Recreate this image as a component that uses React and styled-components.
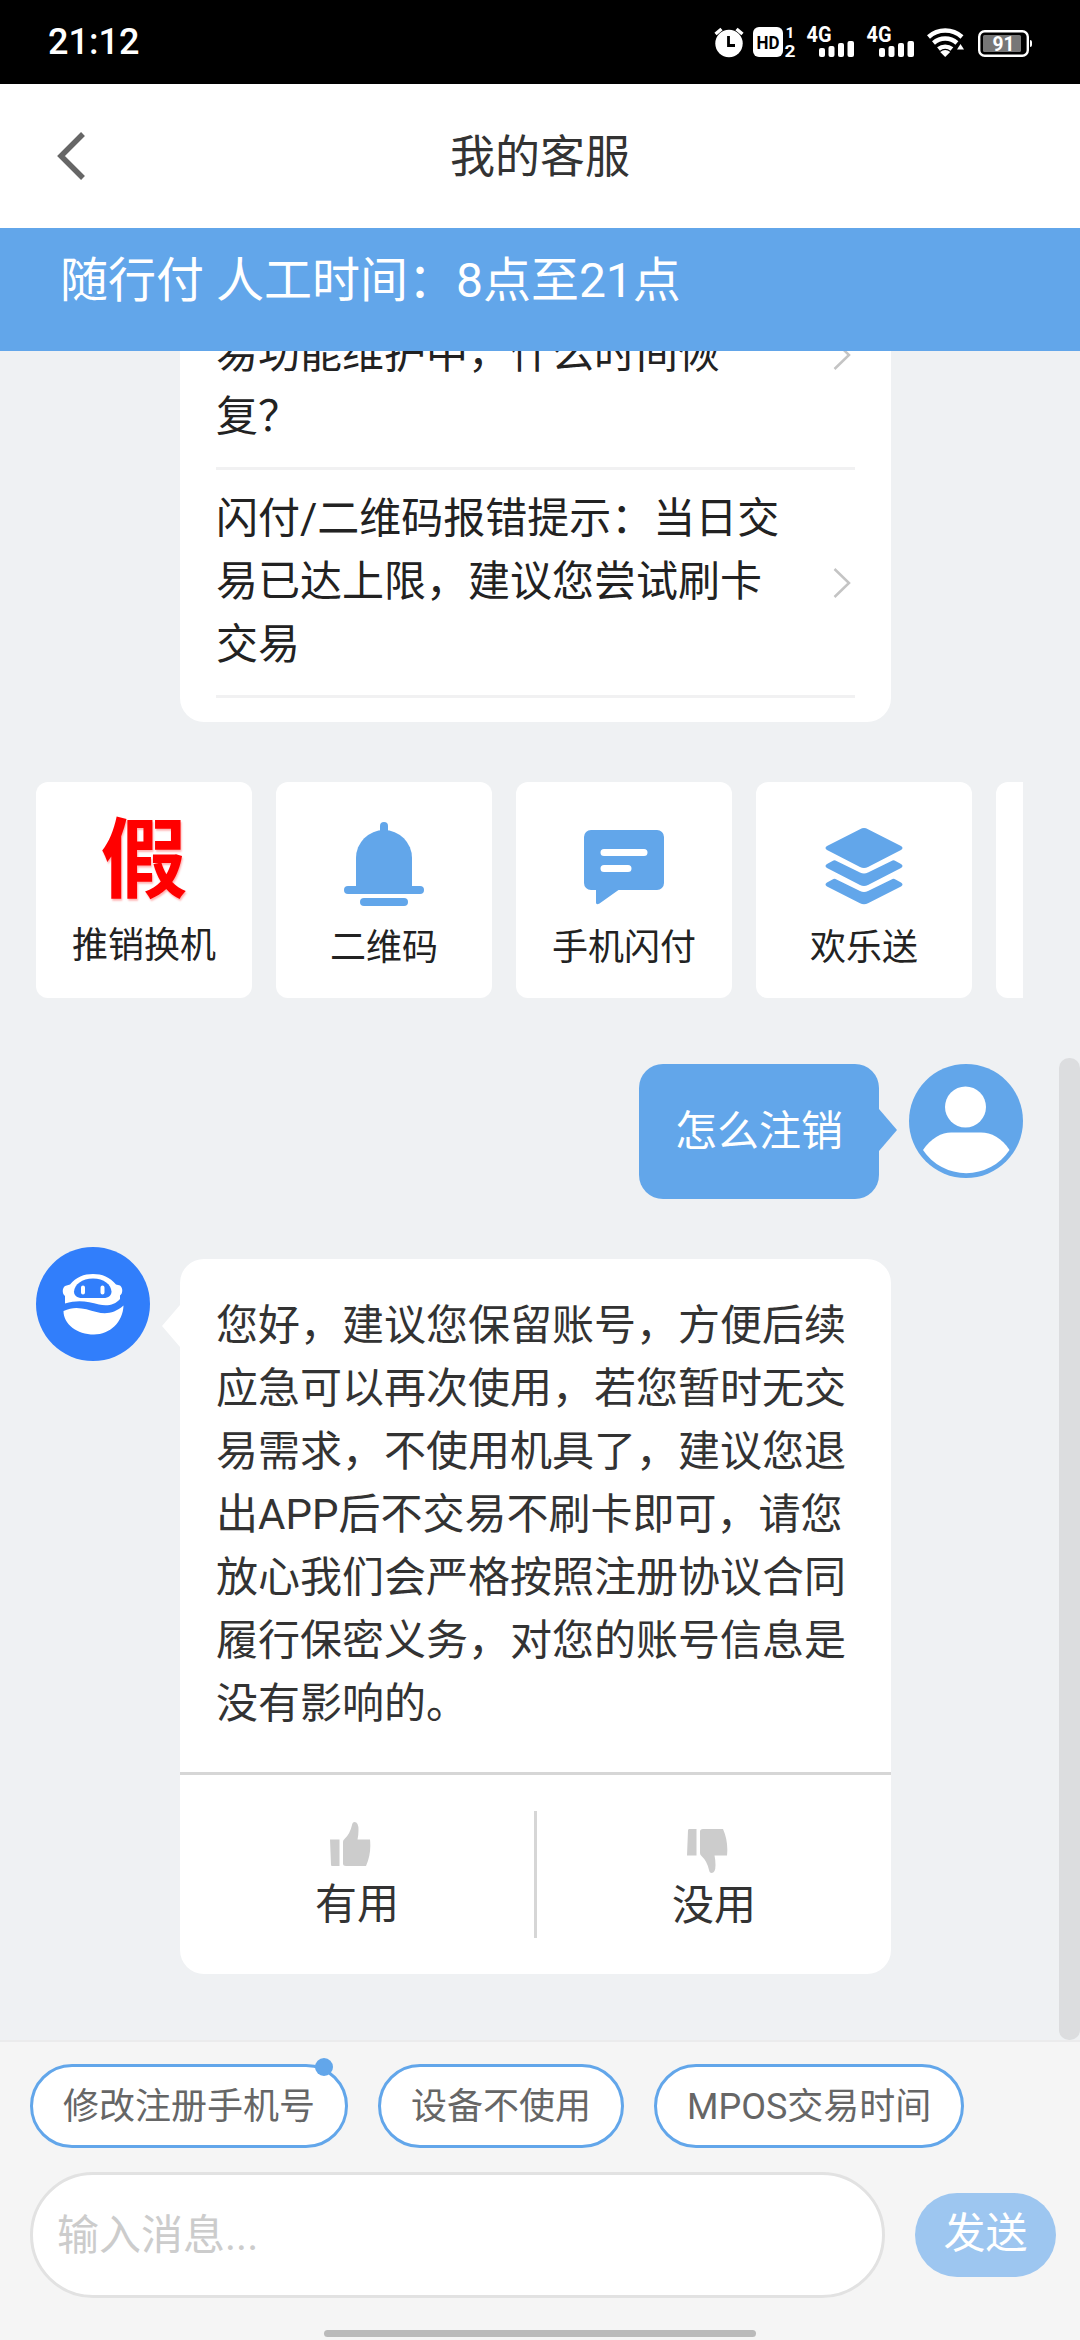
import styled, { createGlobalStyle, css } from "styled-components";

const GlobalStyle = createGlobalStyle`
  *, *::before, *::after {
    box-sizing: border-box;
  }

  body {
    margin: 0;
    background: #f5f5f5;
    font-family: Roboto, "Noto Sans CJK SC", sans-serif;
    font-size: 42px;
    line-height: 63px;
    color: #333;
  }
`;

/* ===================================================
   Screen
   =================================================== */
const Screen = styled.div`
  width: 1080px;
  height: 2340px;
  display: flex;
  flex-direction: column;
  overflow: hidden;
`;

/* ===================================================
   Status bar
   =================================================== */
const StatusBar = styled.div`
  height: 84px;
  flex-shrink: 0;
  display: flex;
  align-items: center;
  justify-content: space-between;
  padding: 0 46px 0 48px;
  background: #000;
  color: #fff;
`;

const Clock = styled.span`
  font-size: 36px;
  font-weight: 500;
  line-height: 42px;
`;

const StatusIcons = styled.svg`
  display: block;
  width: 320px;
  height: 36px;
  font-family: Roboto, sans-serif;
  font-weight: 700;
`;

/* ===================================================
   Header
   =================================================== */
const Header = styled.header`
  height: 144px;
  flex-shrink: 0;
  display: grid;
  grid-template-columns: 120px 1fr 120px;
  align-items: center;
  background: #fff;
`;

const BackButton = styled.button`
  display: flex;
  padding: 0 0 0 56px;
  border: none;
  background: none;
`;

const Title = styled.h1`
  margin: 0;
  padding-top: 2px;
  font-size: 45px;
  font-weight: 400;
  text-align: center;
`;

const Notice = styled.div`
  height: 123px;
  flex-shrink: 0;
  padding: 21px 60px;
  background: #62a6ea;
  color: #fff;
  font-size: 48px;
`;

/* ===================================================
   Chat
   =================================================== */
const Chat = styled.main`
  position: relative;
  flex: 1;
  min-height: 0;
  display: flex;
  flex-direction: column;
  justify-content: flex-end;
  padding: 0 57px 66px 36px;
  background: #eff1f3;
  overflow: hidden;
`;

const ScrollThumb = styled.div`
  position: absolute;
  right: 0;
  bottom: 0;
  width: 21px;
  height: 982px;
  border-radius: 10px;
  background: #dcdddf;
`;

const FaqCard = styled.section`
  flex-shrink: 0;
  width: 711px;
  margin-left: 144px;
  padding: 24px 36px;
  border-radius: 24px;
  background: #fff;
  color: #222;
`;

const FaqRow = styled.div`
  display: flex;
  align-items: center;
  justify-content: space-between;
  height: 228px;
  padding: 17px 4px 19px 0;
  border-bottom: 3px solid #f1f1f2;
`;

const FaqText = styled.p`
  width: 567px;
  margin: 0;
  align-self: flex-end;
`;

const FaqArrow = styled.svg`
  width: 18px;
  height: 30px;
  margin-top: 2px;
`;

const Shortcuts = styled.nav`
  flex-shrink: 0;
  display: flex;
  gap: 24px;
  margin-top: 60px;
  overflow: hidden;
`;

const Shortcut = styled.div`
  flex: 0 0 216px;
  height: 216px;
  display: flex;
  flex-direction: column;
  align-items: center;
  border-radius: 12px;
  background: #fff;
  color: #222;
`;

const ShortcutIcon = styled.div`
  height: ${(props) => (props.$tall ? 136 : 138)}px;
  display: flex;
  align-items: flex-end;

  svg {
    display: block;
    width: 96px;
    height: 108px;
    fill: #62a6ea;
  }
`;

const FakeMark = styled.span`
  font-size: 87px;
  font-weight: 700;
  line-height: 114px;
  color: #f00;
  text-shadow: 1px 2px 2px rgba(255, 0, 0, 0.3);
`;

const ShortcutLabel = styled.span`
  font-size: 36px;
  line-height: 56px;
`;

const Message = styled.div`
  flex-shrink: 0;
  display: flex;
  align-items: flex-start;
  justify-content: ${(props) => (props.$own ? "flex-end" : "flex-start")};
  gap: 30px;
  margin-top: ${(props) => (props.$own ? 66 : 48)}px;
`;

const Avatar = styled.svg`
  flex-shrink: 0;
  width: 114px;
  height: 114px;
`;

const ownBubble = css`
  height: 135px;
  padding: 36px 36px;
  background: #62a6ea;
  color: #fff;

  &::after {
    right: -18px;
    top: 45px;
    border-left: 18px solid #62a6ea;
  }
`;

const botBubble = css`
  width: 711px;
  margin-top: 12px;
  background: #fff;

  &::after {
    left: -18px;
    top: 46px;
    border-right: 18px solid #fff;
  }
`;

const Bubble = styled.div`
  position: relative;
  border-radius: 24px;

  &::after {
    content: "";
    position: absolute;
    border-top: 21px solid transparent;
    border-bottom: 21px solid transparent;
  }

  ${(props) => (props.$own ? ownBubble : botBubble)}
`;

const Answer = styled.p`
  height: 513px;
  margin: 0;
  padding: 35px 36px 0;
`;

const Feedback = styled.div`
  height: 202px;
  display: flex;
  align-items: center;
  border-top: 3px solid #d6d6d6;
`;

const FeedbackOption = styled.div`
  flex: 1;
  display: flex;
  flex-direction: column;
  align-items: center;
  height: 127px;

  & + & {
    border-left: 3px solid #d6d6d6;
  }

  svg {
    display: block;
    width: 42px;
    height: 44px;
    margin-top: ${(props) => (props.$down ? 18 : 11)}px;
    margin-bottom: ${(props) => (props.$down ? 1 : 7)}px;
    margin-right: 14px;
    fill: #ccc;
  }
`;

/* ===================================================
   Composer
   =================================================== */
const Footer = styled.footer`
  height: 300px;
  flex-shrink: 0;
  padding: 22px 24px 0 30px;
  border-top: 2px solid #ebebec;
  background: #f5f5f5;
`;

const Chips = styled.div`
  display: flex;
  gap: 30px;
`;

const Chip = styled.button`
  position: relative;
  height: 84px;
  padding: 3px 30px 0;
  border: 3px solid #62a6ea;
  border-radius: 42px;
  background: #fff;
  color: #666;
  font: 400 36px / 75px Roboto, "Noto Sans CJK SC", sans-serif;
`;

const ChipDot = styled.i`
  position: absolute;
  top: -9px;
  right: 12px;
  width: 18px;
  height: 18px;
  border-radius: 50%;
  background: #62a6ea;
`;

const Composer = styled.div`
  display: flex;
  align-items: center;
  gap: 30px;
  margin-top: 24px;
`;

const MessageInput = styled.input`
  flex: 1;
  min-width: 0;
  height: 126px;
  padding: 0 24px;
  border: 3px solid #e2e2e2;
  border-radius: 63px;
  background: #fff;
  font: inherit;

  &::placeholder {
    color: #ccc;
    opacity: 1;
  }
`;

const SendButton = styled.button`
  width: 141px;
  height: 84px;
  padding: 0 0 2px;
  border: none;
  border-radius: 42px;
  background: #9dc6f0;
  color: #fff;
  font: 400 42px / 82px Roboto, "Noto Sans CJK SC", sans-serif;
`;

const HomeBar = styled.div`
  width: 432px;
  height: 7px;
  margin: 32px 0 0 294px;
  border-radius: 4px;
  background: #bababa;
`;

/* ===================================================
   Icons
   =================================================== */
function Signal({ x }) {
  return (
    <g transform={`translate(${x} 0)`}>
      <text x="-0.500" y="18" fontSize="21.500" textLength="25" lengthAdjust="spacingAndGlyphs">
        4G
      </text>
      <rect x="12" y="24" width="6" height="9" rx="2" />
      <rect x="21.500" y="22" width="6" height="11" rx="2" />
      <rect x="31" y="19" width="6" height="14" rx="2" />
      <rect x="40.500" y="17" width="6.500" height="16" rx="2" />
    </g>
  );
}

function SystemIcons() {
  return (
    <StatusIcons viewBox="0 0 320 36" fill="#fff">
      <circle cx="15" cy="19.5" r="13.7" />
      <path d="M1.500 10l6-5M28.500 10l-6-5" stroke="#fff" strokeWidth="3.400" />
      <path d="M14.500 12v9.500h6.500" fill="none" stroke="#000" strokeWidth="2.800" />
      <rect x="39" y="3" width="30" height="30" rx="6" />
      <text x="42.500" y="24.500" fontSize="18" fill="#000" textLength="23" lengthAdjust="spacingAndGlyphs">
        HD
      </text>
      <text x="71.500" y="14" fontSize="15.500">1</text>
      <text x="70.500" y="32.500" fontSize="16.500" textLength="11" lengthAdjust="spacingAndGlyphs">2</text>
      <Signal x={93} />
      <Signal x={153} />
      <g fill="none" stroke="#fff" strokeWidth="4.400">
        <path d="M214.500 13a25 25 0 0 1 33.500 0" />
        <path d="M219.500 19a17.500 17.500 0 0 1 23.400 0" />
        <path d="M224.500 25a10.500 10.500 0 0 1 13.400 0" />
      </g>
      <path d="M231.200 33l-5-5a8 8 0 0 1 10 0z" />
      <path d="M246.500 20l3.500 5.500h-7z" />
      <rect x="265.200" y="7.200" width="48.600" height="24.600" rx="5.500" fill="none" stroke="#fff" strokeWidth="2.400" />
      <rect x="269" y="11" width="38" height="17" rx="1.500" fill="#777" />
      <path d="M316 16q2 0 2 2v3q0 2-2 2z" />
      <text x="278.500" y="26.500" fontSize="20" textLength="22" lengthAdjust="spacingAndGlyphs">
        91
      </text>
    </StatusIcons>
  );
}

function BellIcon() {
  return (
    <svg viewBox="0 0 96 108">
      <rect x="44" y="10" width="8" height="14" rx="4" />
      <path d="M20 78V46a28 28 0 0 1 56 0v32z" />
      <rect x="8" y="74" width="80" height="8" rx="4" />
      <rect x="24" y="86" width="48" height="8" rx="4" />
    </svg>
  );
}

function CommentIcon() {
  return (
    <svg viewBox="0 0 96 108">
      <path d="M15 18h66a7 7 0 0 1 7 7v46a7 7 0 0 1-7 7H42.500L23.500 91.500q-3.500 2-3.500-1V78h-5a7 7 0 0 1-7-7V25a7 7 0 0 1 7-7z" />
      <path d="M28 40.500h40M28 56.500h24" stroke="#fff" strokeWidth="7" strokeLinecap="round" />
    </svg>
  );
}

function LayersIcon() {
  return (
    <svg viewBox="0 0 96 108">
      <path d="M44 17.200q4-2.200 8 0L85 34q3 2 0 4L52 55q-4 2.200-8 0L11 38q-3-2 0-4z" />
      <path d="M11 52l5.500-3q2-1.300 4 0L44 60.600q4 2 8 0L75.500 49q2-1.300 4 0L85 52q3 2 0 4L52 73q-4 2.200-8 0L11 56q-3-2 0-4z" />
      <path d="M11 70.500l5.500-3q2-1.300 4 0L44 79q4 2 8 0L75.500 67.500q2-1.300 4 0L85 70.500q3 2 0 4L52 91.200q-4 2.200-8 0L11 74.500q-3-2 0-4z" />
    </svg>
  );
}

function UserAvatar() {
  return (
    <Avatar viewBox="0 0 114 114" fill="#fff">
      <circle cx="57" cy="57" r="57" fill="#62a6ea" />
      <circle cx="56.500" cy="43" r="20.500" />
      <path d="M14 86C22 74 33 68.500 42 68.500H72C82 68.500 93 74 100.500 86A52 52 0 0 1 14 86z" />
    </Avatar>
  );
}

function BotAvatar() {
  return (
    <Avatar viewBox="0 0 114 114" fill="#fff">
      <circle cx="57" cy="57" r="57" fill="#317efb" />
      <path d="M29 56.500V49c-3-2-3-8 0-10l5-1.500C40 30 48 27 57 27s17 3 23 10.500l4 1c3 2 3 8 0 10V52c-5 6-13 7.500-21 5.500-11-3-21-5-34-1z" />
      <path d="M57 31.500c11 0 18 6 18.500 13 0 4-3 6.500-8 6.500H46c-5 0-8-2.500-8-6.500C38.500 37.500 46 31.500 57 31.500z" fill="#317efb" />
      <path d="M47 40.500v5M66.500 40.500v5" stroke="#fff" strokeWidth="4" strokeLinecap="round" />
      <path d="M27.500 64c12-6 22-2 33 1 9 2.500 18 1.500 27-6.500C87 75 74 87.500 58 87.500 41 87.500 27.500 77 27.500 64z" />
    </Avatar>
  );
}

function ThumbIcon({ down }) {
  return (
    <svg viewBox="0 0 42 44">
      <g transform={down ? "matrix(1 0 0 -1 0 44)" : undefined}>
        <path d="M1 17.500h9.500V44H3q-1 0-1-1.500z" />
        <path d="M14 20q0-2 1.500-3Q21 12 23 3q.5-3 2.500-3 4 0 4 8 0 5-1 9.500H41q1.500 14-4 26.500H17q-3 0-3-2.500z" />
      </g>
    </svg>
  );
}

/* ===================================================
   Data
   =================================================== */
const QUESTIONS = [
  "易功能维护中，什么时间恢复？",
  "闪付/二维码报错提示：当日交易已达上限，建议您尝试刷卡交易",
];

const SHORTCUTS = [
  { label: "二维码", Icon: BellIcon },
  { label: "手机闪付", Icon: CommentIcon },
  { label: "欢乐送", Icon: LayersIcon },
];

const CHIPS = ["修改注册手机号", "设备不使用", "MPOS交易时间"];

/* ===================================================
   Component
   =================================================== */
export default function App() {
  return (
    <>
      <GlobalStyle />
      <Screen>
        <StatusBar>
          <Clock>21:12</Clock>
          <SystemIcons />
        </StatusBar>

        <Header>
          <BackButton aria-label="返回">
            <svg width="32" height="50" viewBox="0 0 32 50">
              <path d="M27 3L5 25l22 22" fill="none" stroke="#666" strokeWidth="5.500" />
            </svg>
          </BackButton>
          <Title>我的客服</Title>
        </Header>

        <Notice>随行付 人工时间：8点至21点</Notice>

        <Chat>
          <FaqCard>
            {QUESTIONS.map((question) => (
              <FaqRow key={question}>
                <FaqText>{question}</FaqText>
                <FaqArrow viewBox="0 0 18 30">
                  <path d="M1.500 1L16 15 1.500 29" fill="none" stroke="#c4c4c4" strokeWidth="2.500" />
                </FaqArrow>
              </FaqRow>
            ))}
          </FaqCard>

          <Shortcuts>
            <Shortcut>
              <ShortcutIcon $tall>
                <FakeMark>假</FakeMark>
              </ShortcutIcon>
              <ShortcutLabel>推销换机</ShortcutLabel>
            </Shortcut>
            {SHORTCUTS.map(({ label, Icon }) => (
              <Shortcut key={label}>
                <ShortcutIcon>
                  <Icon />
                </ShortcutIcon>
                <ShortcutLabel>{label}</ShortcutLabel>
              </Shortcut>
            ))}
            <Shortcut />
          </Shortcuts>

          <Message $own>
            <Bubble $own>怎么注销</Bubble>
            <UserAvatar />
          </Message>

          <Message>
            <BotAvatar />
            <Bubble>
              <Answer>
                您好，建议您保留账号，方便后续应急可以再次使用，若您暂时无交易需求，不使用机具了，建议您退出APP后不交易不刷卡即可，请您放心我们会严格按照注册协议合同履行保密义务，对您的账号信息是没有影响的。
              </Answer>
              <Feedback>
                <FeedbackOption>
                  <ThumbIcon />
                  有用
                </FeedbackOption>
                <FeedbackOption $down>
                  <ThumbIcon down />
                  没用
                </FeedbackOption>
              </Feedback>
            </Bubble>
          </Message>
          <ScrollThumb />
        </Chat>

        <Footer>
          <Chips>
            {CHIPS.map((chip, index) => (
              <Chip key={chip}>
                {chip}
                {index === 0 && <ChipDot />}
              </Chip>
            ))}
          </Chips>
          <Composer>
            <MessageInput placeholder="输入消息..." />
            <SendButton>发送</SendButton>
          </Composer>
          <HomeBar />
        </Footer>
      </Screen>
    </>
  );
}
